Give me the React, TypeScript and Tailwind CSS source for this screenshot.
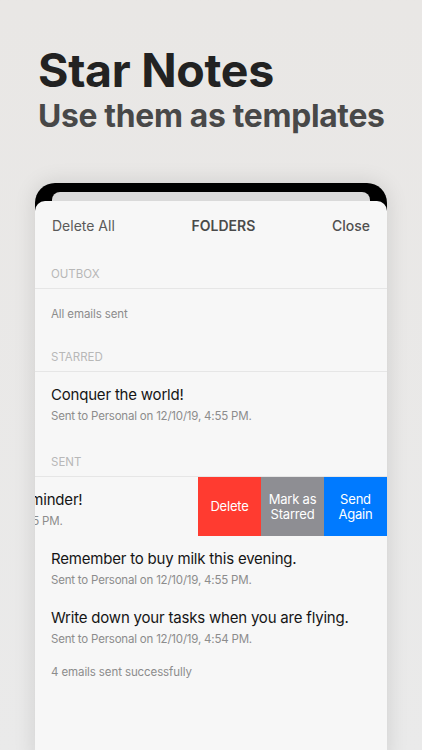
import React from 'react';

const font = { fontFamily: 'Inter, "Liberation Sans", sans-serif' };

const SectionLabel = ({ label, h }: { label: string; h: string }) => (
  <div className={`${h} flex items-end px-[16px] pb-[7px] border-b border-[#e6e6e6]`}>
    <span className="text-[11.5px] leading-[14px] text-[#b8b8b8] uppercase">{label}</span>
  </div>
);

const MailRow = ({ title, sub }: { title: string; sub: string }) => (
  <div className="h-[59px] px-[16px] pt-[13px]">
    <div className="text-[15px] leading-[20px] tracking-[-0.2px] text-[#151515] whitespace-nowrap">{title}</div>
    <div className="text-[11.5px] leading-[16px] tracking-[-0.2px] mt-[3px] text-[#8c8c8c] whitespace-nowrap">{sub}</div>
  </div>
);

const App = () => {
  return (
    <div className="w-[422px] h-[750px] overflow-hidden bg-gradient-to-b from-[#e9e7e5] to-[#eaeaea]" style={font}>
      <div className="px-[38px] pt-[44px] whitespace-nowrap">
        <h1 className="text-[46.5px] leading-[52px] font-bold text-[#222] tracking-[-0.3px]">Star Notes</h1>
        <h2 className="text-[31.8px] leading-[40px] font-bold text-[#484848] tracking-[-0.3px]">Use them as templates</h2>
      </div>

      {/* device */}
      <div className="mx-[35px] mt-[47px] bg-black rounded-t-[20px] pt-[9px] shadow-[0_0_22px_rgba(0,0,0,0.12)]">
        <div className="mx-[17px] h-[9px] rounded-t-[8px] bg-[#dadada]" />
        <div className="bg-[#f7f7f7] rounded-t-[10px] h-[560px] overflow-hidden">
          <div className="h-[48px] px-[17px] flex items-center justify-between text-[14px]">
            <span className="text-[#5a5a5a]">Delete All</span>
            <span className="font-semibold text-[#4a4a4a]">FOLDERS</span>
            <span className="font-medium text-[#505050]">Close</span>
          </div>

          <SectionLabel label="Outbox" h="h-[40px]" />
          <div className="h-[52px] px-[16px] flex items-center">
            <span className="text-[11.5px] tracking-[-0.1px] text-[#8c8c8c]">All emails sent</span>
          </div>

          <SectionLabel label="Starred" h="h-[31px]" />
          <MailRow title="Conquer the world!" sub="Sent to Personal on 12/10/19, 4:55 PM." />

          <SectionLabel label="Sent" h="h-[46px]" />
          <div className="h-[59px] flex">
            <div className="flex-1 overflow-hidden">
              <div className="ml-[-173px] pt-[13px]">
                <div className="text-[15px] leading-[20px] tracking-[-0.2px] text-[#151515] whitespace-nowrap">Don't forget to set the reminder!</div>
                <div className="text-[11.5px] leading-[16px] tracking-[-0.2px] mt-[3px] text-[#8c8c8c] whitespace-nowrap">Sent to Personal on 12/10/19, 4:55 PM.</div>
              </div>
            </div>
            <div className="w-[63px] bg-[#ff3b30] flex items-center justify-center text-white text-[13px] tracking-[-0.2px]">Delete</div>
            <div className="w-[63px] bg-[#8e8e93] flex items-center justify-center text-white text-[13px] tracking-[-0.2px] leading-[15px] text-center">Mark as<br />Starred</div>
            <div className="w-[63px] bg-[#007aff] flex items-center justify-center text-white text-[13px] tracking-[-0.2px] leading-[15px] text-center">Send<br />Again</div>
          </div>
          <MailRow title="Remember to buy milk this evening." sub="Sent to Personal on 12/10/19, 4:55 PM." />
          <MailRow title="Write down your tasks when you are flying." sub="Sent to Personal on 12/10/19, 4:54 PM." />
          <div className="px-[16px] pt-[4px]">
            <span className="text-[11.5px] tracking-[-0.1px] text-[#8c8c8c]">4 emails sent successfully</span>
          </div>
        </div>
      </div>
    </div>
  );
};

export default App;
